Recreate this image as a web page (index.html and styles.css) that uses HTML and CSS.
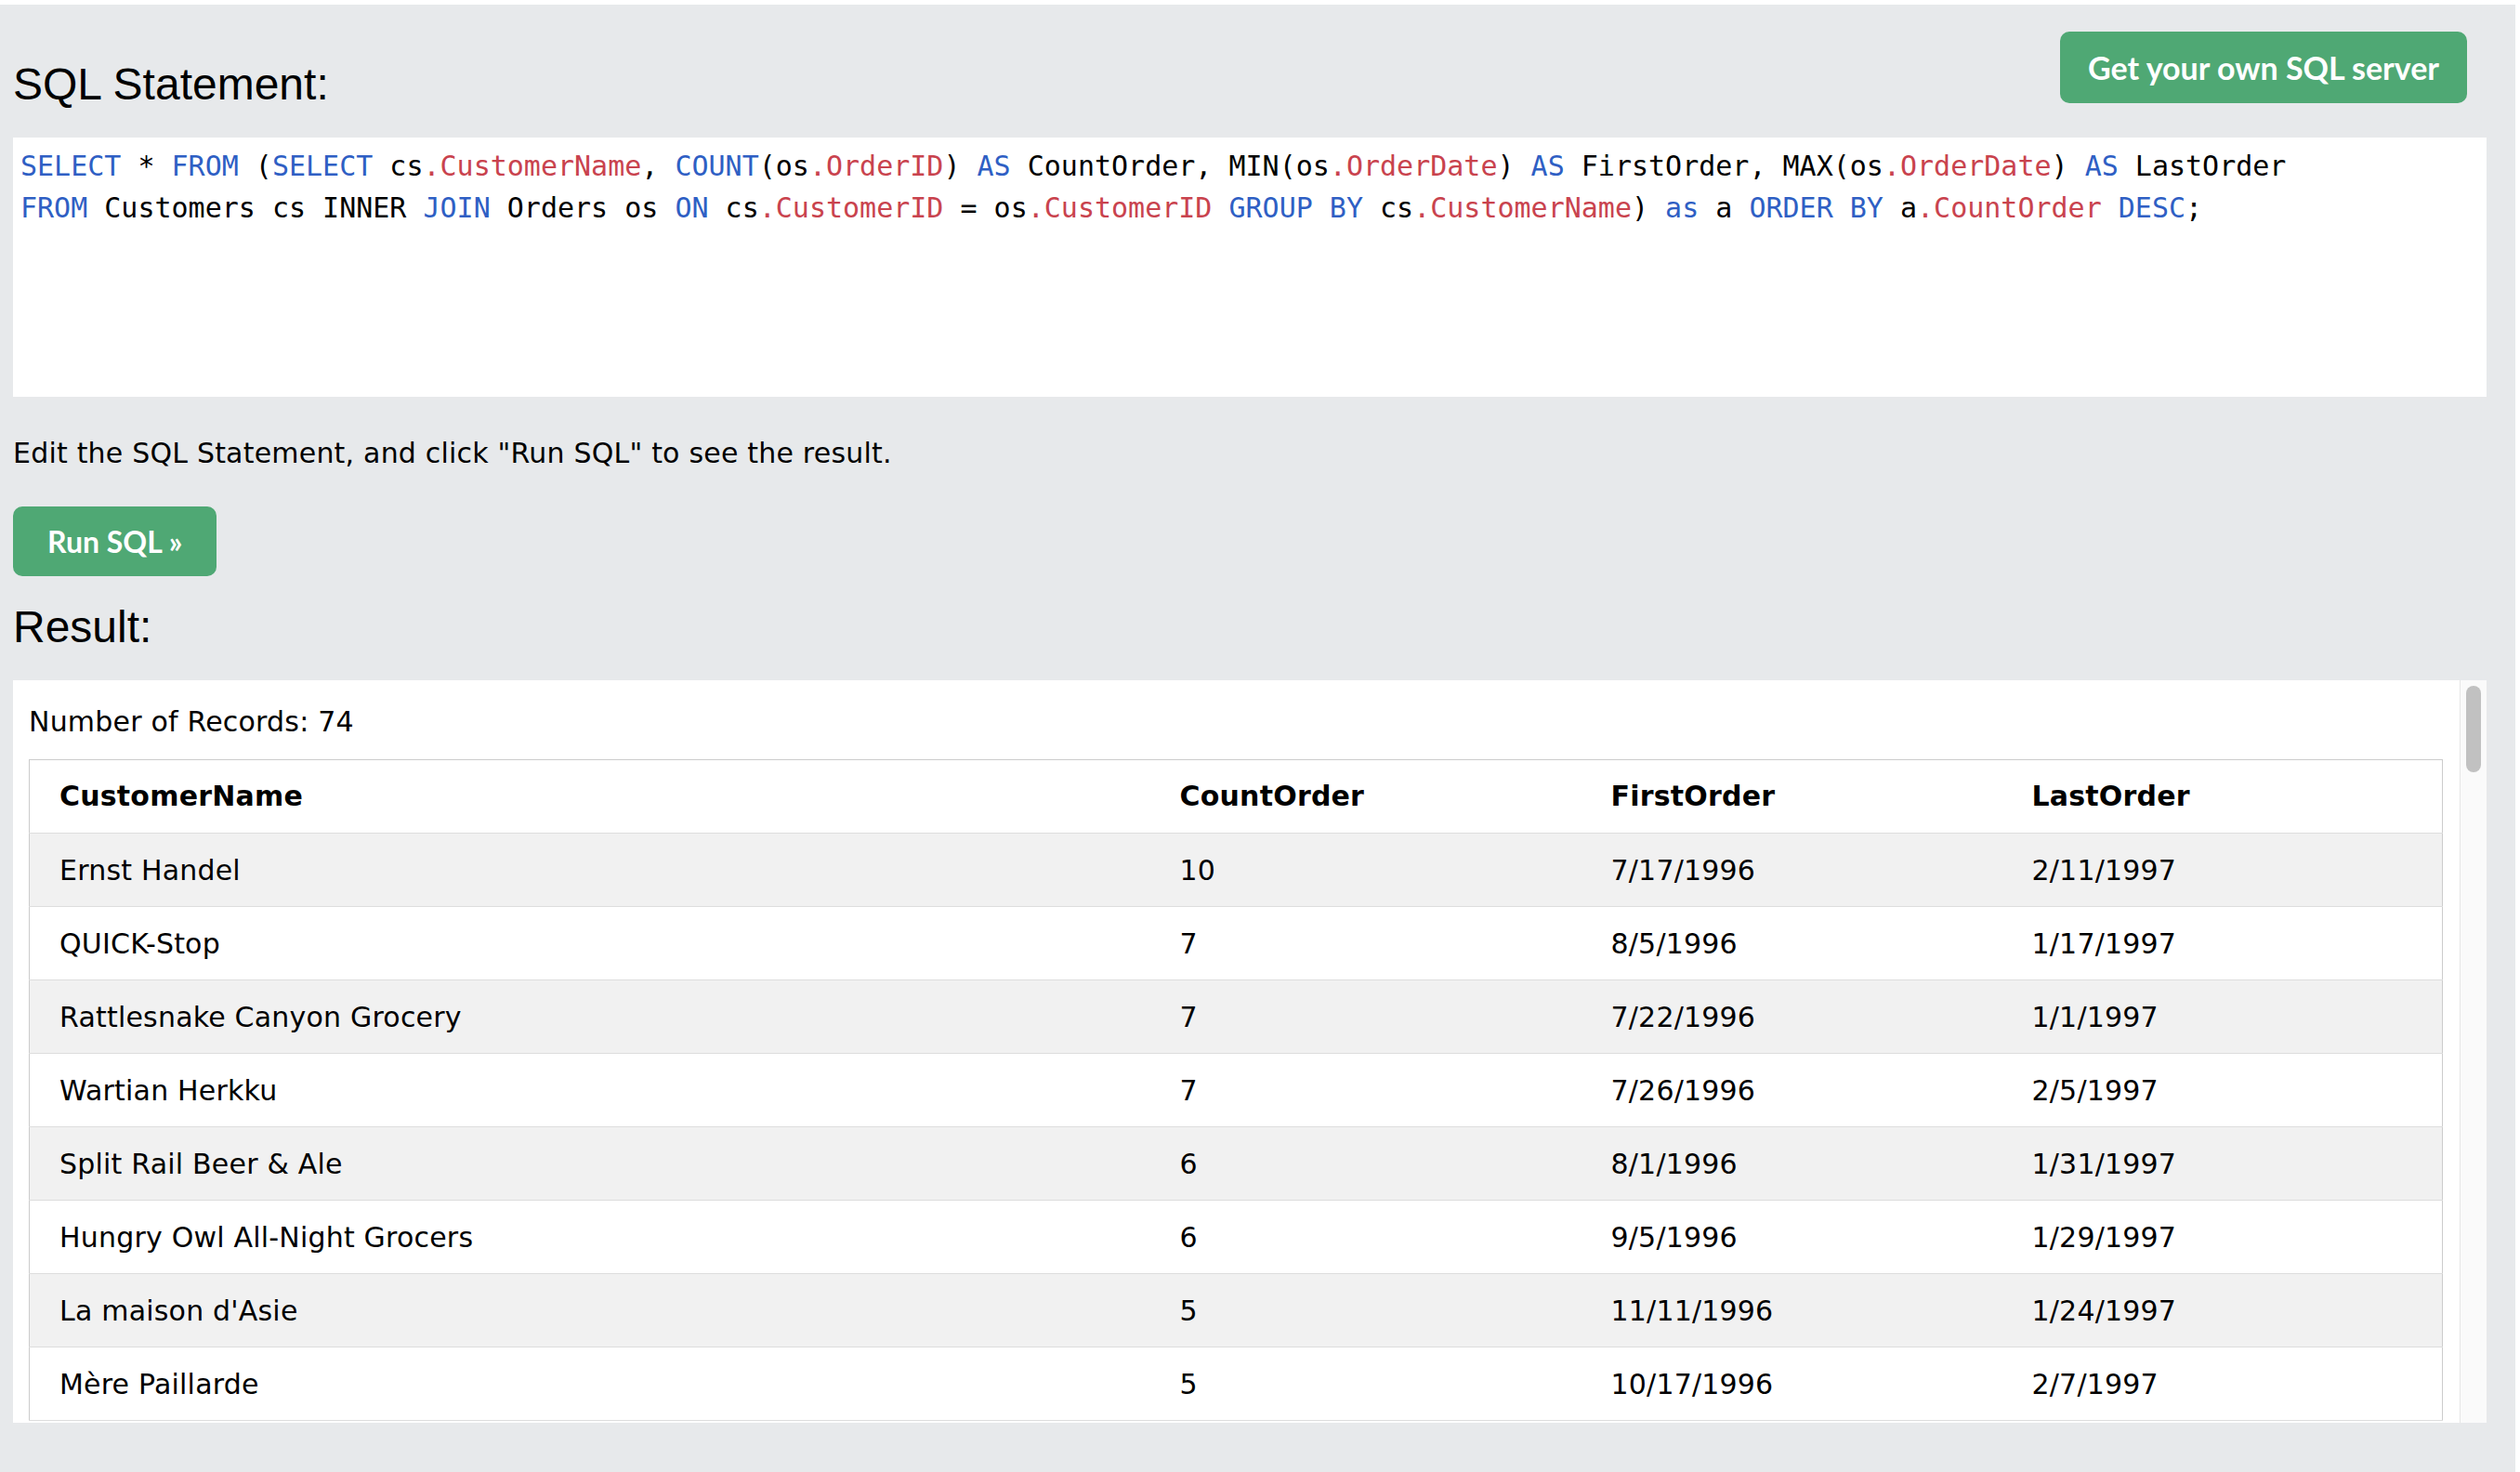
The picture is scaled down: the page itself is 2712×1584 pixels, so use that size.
FILE: index.html
```html
<!DOCTYPE html>
<html lang="en">
<head>
<meta charset="utf-8">
<title>SQL Tryit</title>
<link rel="stylesheet" href="styles.css">
</head>
<body>
<div class="page">
  <div class="top">
    <h2 class="title">SQL Statement:</h2>
    <a class="btn btn-server">Get your own SQL server</a>
  </div>
  <div class="code"><div class="line"><span class="kw">SELECT</span> * <span class="kw">FROM</span> (<span class="kw">SELECT</span> cs<span class="var">.CustomerName</span>, <span class="kw">COUNT</span>(os<span class="var">.OrderID</span>) <span class="kw">AS</span> CountOrder, MIN(os<span class="var">.OrderDate</span>) <span class="kw">AS</span> FirstOrder, MAX(os<span class="var">.OrderDate</span>) <span class="kw">AS</span> LastOrder</div><div class="line"><span class="kw">FROM</span> Customers cs INNER <span class="kw">JOIN</span> Orders os <span class="kw">ON</span> cs<span class="var">.CustomerID</span> = os<span class="var">.CustomerID</span> <span class="kw">GROUP BY</span> cs<span class="var">.CustomerName</span>) <span class="kw">as</span> a <span class="kw">ORDER BY</span> a<span class="var">.CountOrder</span> <span class="kw">DESC</span>;</div></div>
  <p class="hint">Edit the SQL Statement, and click "Run SQL" to see the result.</p>
  <div class="run-row"><button class="btn btn-run">Run SQL »</button></div>
  <h2 class="title result-title">Result:</h2>
  <div class="result">
    <div class="result-body">
      <div class="count">Number of Records: 74</div>
      <table class="grid">
        <colgroup>
          <col class="c1"><col class="c2"><col class="c3"><col class="c4">
        </colgroup>
        <thead>
          <tr><th>CustomerName</th><th>CountOrder</th><th>FirstOrder</th><th>LastOrder</th></tr>
        </thead>
        <tbody>
          <tr><td>Ernst Handel</td><td>10</td><td>7/17/1996</td><td>2/11/1997</td></tr>
          <tr><td>QUICK-Stop</td><td>7</td><td>8/5/1996</td><td>1/17/1997</td></tr>
          <tr><td>Rattlesnake Canyon Grocery</td><td>7</td><td>7/22/1996</td><td>1/1/1997</td></tr>
          <tr><td>Wartian Herkku</td><td>7</td><td>7/26/1996</td><td>2/5/1997</td></tr>
          <tr><td>Split Rail Beer &amp; Ale</td><td>6</td><td>8/1/1996</td><td>1/31/1997</td></tr>
          <tr><td>Hungry Owl All-Night Grocers</td><td>6</td><td>9/5/1996</td><td>1/29/1997</td></tr>
          <tr><td>La maison d'Asie</td><td>5</td><td>11/11/1996</td><td>1/24/1997</td></tr>
          <tr><td>Mère Paillarde</td><td>5</td><td>10/17/1996</td><td>2/7/1997</td></tr>
        </tbody>
      </table>
    </div>
    <div class="scrollbar"><div class="thumb"></div></div>
  </div>
</div>
</body>
</html>
```
FILE: styles.css
```css
html, body {
  margin: 0;
  padding: 0;
  background: #ffffff;
}

body {
  font-family: "DejaVu Sans", Verdana, sans-serif;
  font-size: 30px;
  letter-spacing: 0.2px;
  color: #000;
}

.page {
  margin: 5px 5px 0 0;
  min-height: 1579px;
  box-sizing: border-box;
  background: #e7e9eb;
  padding: 0 31px 0 14px;
}

.top {
  display: flex;
  justify-content: space-between;
  align-items: flex-start;
  height: 143px;
}

.title {
  margin: 0;
  font-family: "Liberation Sans", Arial, sans-serif;
  font-weight: normal;
  font-size: 48px;
  line-height: 54px;
  letter-spacing: 0;
}

.top .title {
  margin-top: 59px;
}

.btn {
  display: flex;
  align-items: center;
  border: none;
  color: #ffffff;
  background: #4fa874;
  font-family: Lato, "Open Sans", sans-serif;
  font-weight: bold;
  letter-spacing: 0;
  border-radius: 10px;
  box-sizing: border-box;
  white-space: nowrap;
}

.btn-server {
  margin: 29px 21px 0 0;
  height: 77px;
  padding: 0 30px;
  font-size: 34px;
}

.code {
  background: #ffffff;
  height: 279px;
  box-sizing: border-box;
  padding: 8px 8px;
  font-family: "DejaVu Sans Mono", Menlo, monospace;
  font-size: 30px;
  line-height: 45px;
  letter-spacing: 0;
  white-space: pre;
  overflow: hidden;
}

.kw {
  color: #2f5fc4;
}

.var {
  color: #c9434e;
}

.hint {
  margin: 38px 0 0;
  line-height: 45px;
}

.run-row {
  display: flex;
  margin-top: 35px;
}

.btn-run {
  height: 75px;
  padding: 0 37px;
  font-size: 32px;
}

.result-title {
  margin-top: 28px;
}

.result {
  display: flex;
  margin-top: 30px;
  height: 799px;
  background: #ffffff;
}

.result-body {
  flex: 1;
  min-width: 0;
  overflow: hidden;
  padding: 22px 18px 0 17px;
}

.count {
  line-height: 46px;
}

.grid {
  margin-top: 17px;
  width: 100%;
  border-collapse: collapse;
  table-layout: fixed;
  border: 1px solid #cccccc;
}

.c1 { width: 1222px; }
.c2 { width: 464px; }
.c3 { width: 453px; }

.grid th,
.grid td {
  text-align: left;
  padding: 16px 16px;
  line-height: 46px;
  border-bottom: 1px solid #dddddd;
  white-space: nowrap;
}

.grid th {
  font-weight: bold;
}

.grid td {
  padding-top: 17px;
  padding-bottom: 15px;
}

.grid th:first-child,
.grid td:first-child {
  padding-left: 32px;
}

.grid tbody tr:nth-child(odd) {
  background: #f1f1f1;
}

.scrollbar {
  width: 28px;
  flex: none;
  background: #fafafa;
  border-left: 1px solid #e6e6e6;
}

.thumb {
  width: 16px;
  height: 93px;
  margin: 6px 0 0 6px;
  border-radius: 8px;
  background: #c1c1c1;
}
```
